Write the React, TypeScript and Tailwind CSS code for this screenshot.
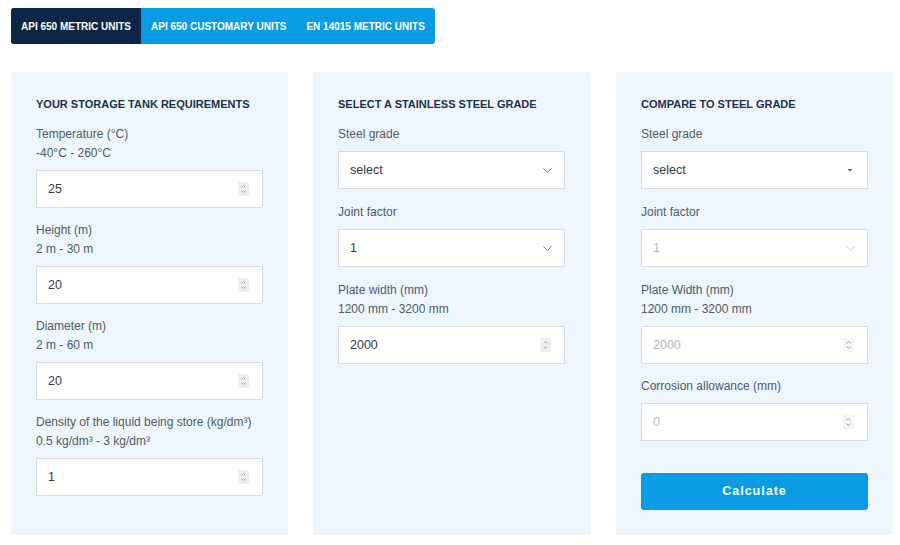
import { ChevronDown } from "lucide-react";
import type { ReactNode } from "react";

const font = { fontFamily: '"Liberation Sans", Arial, sans-serif' };

function Spinner({ muted }: { muted?: boolean }) {
  return (
    <span className={`flex h-[14px] w-[11px] items-center justify-center rounded-[2px] ${muted ? "bg-[#f3f4f6]" : "bg-[#eceef1]"}`}>
      <svg width="7" height="10" viewBox="0 0 7 10" fill="none" stroke="#9aa3ad" strokeWidth="1">
        <path d="M1.5 3.5 L3.5 1.5 L5.5 3.5" />
        <path d="M1.5 6.5 L3.5 8.5 L5.5 6.5" />
      </svg>
    </span>
  );
}

function NumberInput({ value, disabled }: { value: string; disabled?: boolean }) {
  return (
    <div className="flex h-[38px] items-center justify-between border border-[#d7dce1] bg-white pl-[11px] pr-[13px]">
      <span className={`text-[12.5px] ${disabled ? "text-[#b3b8bd]" : "text-[#333a42]"}`}>{value}</span>
      <Spinner muted={disabled} />
    </div>
  );
}

function SelectBox({ value, disabled, caret }: { value: string; disabled?: boolean; caret?: boolean }) {
  return (
    <div className="mb-[1px] flex h-[38px] items-center justify-between border border-[#d7dce1] bg-white pl-[11px] pr-[9px]">
      <span className={`text-[12.5px] ${disabled ? "text-[#b3b8bd]" : "text-[#333a42]"}`}>{value}</span>
      {caret ? (
        <svg width="14" height="14" viewBox="0 0 14 14" className="mr-[1px]">
          <path d="M4.5 6 L9.5 6 L7 8.5 Z" fill="#5a6470" />
        </svg>
      ) : (
        <ChevronDown size={15} strokeWidth={1.5} color={disabled ? "#c2c7cc" : "#6b747e"} />
      )}
    </div>
  );
}

function Field({ label, range, children }: { label: string; range?: string; children: ReactNode }) {
  return (
    <div className="flex flex-col">
      <div className="text-[12px] leading-[20px] text-[#4d5b69]">{label}</div>
      {range && <div className="text-[12px] leading-[19px] text-[#4d5b69]">{range}</div>}
      <div className="mt-[7px]">{children}</div>
    </div>
  );
}

function Panel({ title, children }: { title: string; children: ReactNode }) {
  return (
    <div className="h-[463px] w-[277px] bg-[#eef6fb] px-[25px] pt-[24px]">
      <h2 className="text-[11px] font-bold leading-[16px] text-[#1c324d]">{title}</h2>
      <div className="mt-[12px] flex flex-col gap-[12px]">{children}</div>
    </div>
  );
}

export default function App() {
  const tabs = ["API 650 METRIC UNITS", "API 650 CUSTOMARY UNITS", "EN 14015 METRIC UNITS"];

  return (
    <div className="min-h-[545px] w-[900px] bg-white pl-[11px] pt-[8px]" style={font}>
      {/* unit tabs */}
      <div className="flex h-[36px] w-fit overflow-hidden rounded-[3px] bg-[#0a9be5]">
        {tabs.map((t, i) => (
          <div
            key={t}
            className={`flex items-center px-[10px] text-[10px] font-bold text-white ${
              i === 0 ? "bg-[#0b2646]" : ""
            }`}
          >
            {t}
          </div>
        ))}
      </div>

      <div className="mt-[28px] flex gap-[25px]">
        <Panel title="YOUR STORAGE TANK REQUIREMENTS">
          <Field label="Temperature (°C)" range="-40°C - 260°C">
            <NumberInput value="25" />
          </Field>
          <Field label="Height (m)" range="2 m - 30 m">
            <NumberInput value="20" />
          </Field>
          <Field label="Diameter (m)" range="2 m - 60 m">
            <NumberInput value="20" />
          </Field>
          <Field label="Density of the liquid being store (kg/dm³)" range="0.5 kg/dm³ - 3 kg/dm³">
            <NumberInput value="1" />
          </Field>
        </Panel>

        <Panel title="SELECT A STAINLESS STEEL GRADE">
          <Field label="Steel grade">
            <SelectBox value="select" />
          </Field>
          <Field label="Joint factor">
            <SelectBox value="1" />
          </Field>
          <Field label="Plate width (mm)" range="1200 mm - 3200 mm">
            <NumberInput value="2000" />
          </Field>
        </Panel>

        <div className="ml-[1px]">
          <Panel title="COMPARE TO STEEL GRADE">
            <Field label="Steel grade">
              <SelectBox value="select" caret />
            </Field>
            <Field label="Joint factor">
              <SelectBox value="1" disabled />
            </Field>
            <Field label="Plate Width (mm)" range="1200 mm - 3200 mm">
              <NumberInput value="2000" disabled />
            </Field>
            <Field label="Corrosion allowance (mm)">
              <NumberInput value="0" disabled />
            </Field>
            <button className="mt-[20px] h-[37px] w-full rounded-[3px] bg-[#0a9be5] text-[12.5px] font-bold tracking-[1px] text-white">
              Calculate
            </button>
          </Panel>
        </div>
      </div>
    </div>
  );
}
